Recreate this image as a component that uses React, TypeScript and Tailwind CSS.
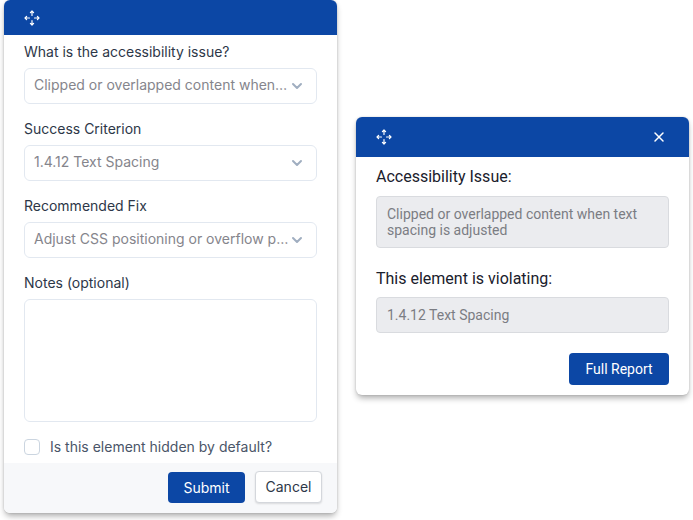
import React from "react";

const inter = "font-['Inter',sans-serif]";
const roboto = "font-['Roboto',sans-serif]";

function MoveIcon() {
  return (
    <svg width="16" height="16" viewBox="0 0 16 16" fill="none" stroke="white" strokeWidth="1.2" strokeLinecap="round" strokeLinejoin="round">
      <path d="M8 1v4.5M6.4 2.6 8 1l1.6 1.6" />
      <path d="M8 15v-4.5M6.4 13.4 8 15l1.6-1.6" />
      <path d="M1 8h4.5M2.6 6.4 1 8l1.6 1.6" />
      <path d="M15 8h-4.5M13.4 6.4 15 8l-1.6 1.6" />
    </svg>
  );
}

function Select({ value }: { value: string }) {
  return (
    <div className="flex h-9 items-center rounded-md border border-[#e2e8f0] bg-white pl-[9px] pr-[13px]">
      <span className="mb-[2px] min-w-0 flex-1 truncate text-sm leading-5 text-[#85858c]">{value}</span>
      <svg className="ml-[2px] shrink-0" width="12" height="12" viewBox="0 0 12 12" fill="none" stroke="#a0aec0" strokeWidth="2" strokeLinecap="round" strokeLinejoin="round">
        <path d="M2 4l4 4 4-4" />
      </svg>
    </div>
  );
}

function Field({ label, value }: { label: string; value: string }) {
  return (
    <div className="mb-[15px]">
      <div className="mb-[6px] text-sm leading-5 text-[#2d3748]">{label}</div>
      <Select value={value} />
    </div>
  );
}

export default function App() {
  return (
    <div className="flex h-[520px] w-[693px] items-start overflow-hidden bg-white pl-1">
      <div className={`${inter} h-[513px] w-[333px] shrink-0 overflow-hidden rounded-md bg-white shadow-[0_4px_6px_-1px_rgba(0,0,0,0.32),0_0_2px_rgba(0,0,0,0.18)]`}>
        <div className="flex h-[35px] items-center bg-[#0c47a5] pl-5">
          <MoveIcon />
        </div>
        <div className="px-5 pt-[7px]">
          <Field label="What is the accessibility issue?" value="Clipped or overlapped content when text spacing is adjusted" />
          <Field label="Success Criterion" value="1.4.12 Text Spacing" />
          <Field label="Recommended Fix" value="Adjust CSS positioning or overflow properties" />
          <div className="mb-[6px] text-sm leading-5 text-[#2d3748]">Notes (optional)</div>
          <div className="h-[123px] rounded-md border border-[#e2e8f0] bg-white" />
          <div className="mt-[17px] flex h-4 items-center">
            <div className="h-4 w-4 rounded-[4px] border border-[#cbd5e0] bg-white" />
            <span className="ml-[10px] text-sm leading-5 text-[#4a5568]">Is this element hidden by default?</span>
          </div>
        </div>
        <div className="mt-2 flex h-[50px] items-start justify-end bg-[#f7f8fa] pr-[15px] pt-2">
          <button className="mt-px h-[31px] w-[77px] rounded-[4px] bg-[#0c47a5] text-sm text-white">Submit</button>
          <button className="ml-[10px] h-8 w-[67px] rounded-[4px] border border-[#d4d7dc] bg-white text-sm text-[#2d3748] shadow-[0_1px_2px_rgba(0,0,0,0.12)]">Cancel</button>
        </div>
      </div>

      <div className={`${roboto} ml-[19px] mt-[117px] h-[278px] w-[333px] shrink-0 overflow-hidden rounded-md bg-white shadow-[0_4px_6px_-1px_rgba(0,0,0,0.32),0_0_2px_rgba(0,0,0,0.18)]`}>
        <div className="flex h-10 items-center justify-between bg-[#0c47a5] pl-5 pr-[24px]">
          <MoveIcon />
          <svg width="12" height="12" viewBox="0 0 12 12" fill="none" stroke="white" strokeWidth="1.5" strokeLinecap="round">
            <path d="M2 2l8 8M10 2l-8 8" />
          </svg>
        </div>
        <div className="px-5 pt-[9px]">
          <div className="text-base leading-[22px] text-[#1a202c]">Accessibility Issue:</div>
          <div className="mt-[8px] h-[52px] rounded-[4px] border border-[#d9dbdf] bg-[#ebecef] px-[10px] py-[9px] text-sm leading-4 text-[#7b7d83]">
            Clipped or overlapped content when text spacing is adjusted
          </div>
          <div className="mt-[20px] text-base leading-[22px] text-[#1a202c]">This element is violating:</div>
          <div className="mt-[7px] flex h-9 items-center rounded-[4px] border border-[#d9dbdf] bg-[#ebecef] px-[10px] text-sm text-[#7b7d83]">
            1.4.12 Text Spacing
          </div>
          <div className="mt-[20px] flex justify-end">
            <button className="h-8 w-[100px] rounded-[4px] bg-[#0c47a5] text-sm text-white">Full Report</button>
          </div>
        </div>
      </div>
    </div>
  );
}
